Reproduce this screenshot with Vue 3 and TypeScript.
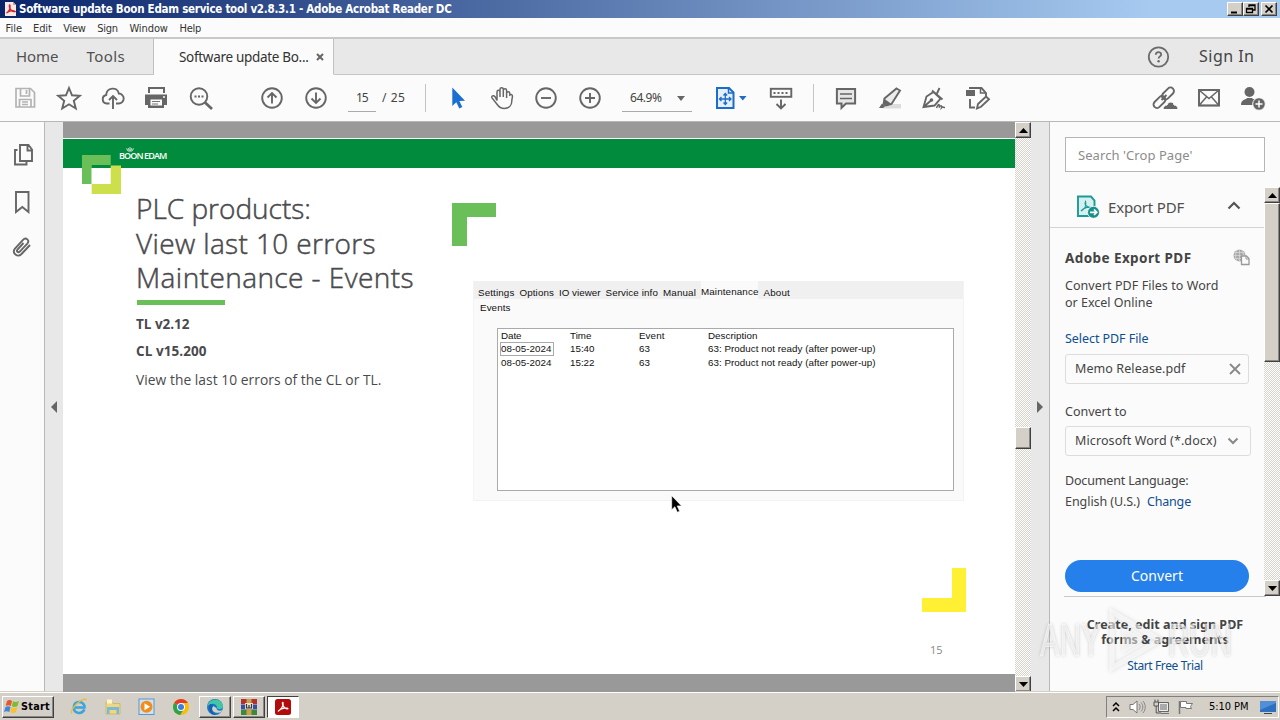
<script setup lang="ts">
interface Row { date: string; time: string; event: string; text: string }

const menus = [
  { label: 'File', w: 16 }, { label: 'Edit', w: 18 }, { label: 'View', w: 22 },
  { label: 'Sign', w: 20 }, { label: 'Window', w: 38 }, { label: 'Help', w: 21 },
]
const serviceTabs = [
  { label: 'Settings', w: 36 }, { label: 'Options', w: 34 }, { label: 'IO viewer', w: 41 },
  { label: 'Service info', w: 52 }, { label: 'Manual', w: 32.5 }, { label: 'Maintenance', w: 57, active: true },
  { label: 'About', w: 26 },
]
const rows: Row[] = [
  { date: '08-05-2024', time: '15:40', event: '63', text: '63: Product not ready (after power-up)' },
  { date: '08-05-2024', time: '15:22', event: '63', text: '63: Product not ready (after power-up)' },
]

// Tracks a single line of text so that it spans the given width.
const vFit = {
  mounted(el: HTMLElement, binding: { value: number }) {
    const range = document.createRange()
    range.selectNodeContents(el)
    const natural = range.getBoundingClientRect().width
    const gaps = (el.textContent || '').trim().length
    el.style.letterSpacing = ((binding.value + 0.5 - natural) / gaps).toFixed(3) + 'px'
  },
}
</script>

<template>
  <div class="screen">
    <header class="titlebar">
      <svg class="app-icon" width="13" height="16" viewBox="0 0 13 16">
        <path d="M1 1h8l3 3v11H1z" fill="#f6e9e6" /><path d="M9 1v3h3" fill="#d99" />
        <path d="M2.500 12C5 11 6.500 7 6 4.500 5.500 3 4.800 5 6 7.500S9 11 11 10.500C9 9 5 10 2.500 12z" fill="none" stroke="#d3222a" stroke-width="1.300" />
      </svg>
      <span v-fit="432">Software update Boon Edam service tool v2.8.3.1 - Adobe Acrobat Reader DC</span>
      <div class="winbtns">
        <i class="btn3d"><svg width="16" height="14"><path d="M4 10.500h6" stroke="#000" stroke-width="2" /></svg></i>
        <i class="btn3d"><svg width="16" height="14"><path d="M6 5V3h6v5h-2M6 3.500h6M3.500 6.500h6v4h-6zM3.500 7h6" fill="none" stroke="#000" stroke-width="1.300" /></svg></i>
        <i class="btn3d last"><svg width="16" height="14"><path d="M4.500 3.500l7 7M11.500 3.500l-7 7" stroke="#000" stroke-width="1.700" /></svg></i>
      </div>
    </header>

    <nav class="menubar">
      <span v-for="m in menus" :key="m.label" v-fit="m.w">{{ m.label }}</span>
    </nav>

    <div class="tabs">
      <div class="tab home"><span v-fit="42">Home</span><span v-fit="38">Tools</span></div>
      <div class="tab active">
        <span v-fit="129">Software update Bo...</span>
        <svg width="10" height="10"><path d="M2 2l6 6M8 2l-6 6" stroke="#666" stroke-width="2" /></svg>
      </div>
      <div class="tab rest">
        <svg width="24" height="24" viewBox="0 0 24 24"><circle cx="11.500" cy="12" r="9.700" fill="none" stroke="#6b6b6b" stroke-width="1.800" /><path d="M8.800 9.800c0-3.600 5.400-3.400 5.400-.4 0 2-2.600 2-2.600 4.100" fill="none" stroke="#6b6b6b" stroke-width="1.800" /><circle cx="11.600" cy="16.300" r="1.200" fill="#6b6b6b" /></svg>
        <span v-fit="55">Sign In</span>
      </div>
    </div>

    <div class="toolbar">
      <div class="group g1">
        <svg class="ic" viewBox="0 0 44 46"><g fill="none" stroke="#b3b3b3" stroke-width="1.700"><path d="M13 13.500h14.500l4 4V32H13z" /><path d="M17.500 14v7h9v-7M16.500 32v-7.500h11.500V32M19 27h6M19 29.500h6M23.500 15v4" /></g></svg>
        <svg class="ic" viewBox="0 0 44 46"><path d="M22 13l3 7.300 7.800.5-6 5 2 7.700-6.800-4.200-6.800 4.200 2-7.700-6-5 7.800-.5z" class="ln" /></svg>
        <svg class="ic" viewBox="0 0 44 46"><path d="M18.500 28.500h-2.800a4.300 4.300 0 01-.5-8.500c.4-7.800 11.300-8.600 12.600-1.500a5 5 0 01-.2 10H25" class="ln" /><path d="M22 34V21.500M18 25l4-4 4 4" class="ln" /></svg>
        <svg class="ic" viewBox="0 0 44 46"><path d="M13 12h17v6H13zM10 19.500h22V30h-3v3H13v-3h-3z" fill="#666" /><path d="M15 14h13v4H15zM15.500 24.500h11.500v6H15.500z" fill="#fbfbfb" /><path d="M17 26.500h8M17 29h6" stroke="#777" stroke-width="1" /><circle cx="29" cy="22" r="1" fill="#fbfbfb" /></svg>
        <svg class="ic" viewBox="0 0 44 46"><circle cx="20" cy="21.500" r="8.300" class="ln" /><path d="M26 27.500l7 6.500" stroke="#666" stroke-width="2.800" /><path d="M15.500 21.500h2M19 21.500h2M22.500 21.500h2" stroke="#666" stroke-width="1.800" /></svg>
      </div>
      <div class="group g2">
        <svg class="ic" viewBox="0 0 44 46"><circle cx="22" cy="23" r="9.800" class="ln" /><path d="M22 28.500v-10M17.500 22.500l4.500-4.500 4.500 4.500" class="ln" /></svg>
        <svg class="ic" viewBox="0 0 44 46"><circle cx="22" cy="23" r="9.800" class="ln" /><path d="M22 17.500v10M17.500 23.500l4.500 4.500 4.500-4.500" class="ln" /></svg>
      </div>
      <div class="pagefield"><span class="cur"><span v-fit="11">15</span></span><span v-fit="23" class="of">/ 25</span></div>
      <i class="sep s1"></i>
      <div class="group g3">
        <svg class="ic" viewBox="0 0 44 46"><path d="M16.300 12.500v18.500l4-3.800 3 6.300 3-1.400-2.900-6.100 5.600-.3z" fill="#1b6fd0" /></svg>
        <svg class="ic" viewBox="0 0 44 46"><path d="M17 25.500V17c0-2.300 3-2.300 3 0v5-7.500c0-2.300 3.300-2.300 3.300 0V22v-6.500c0-2.300 3.300-2.300 3.300 0V23 18.500c0-2.300 3.200-2.300 3.200 0V20c2-1 3 0 2.500 2.500-.2 1.500-.5 2-.5 3.500 0 4.800-3.200 7.500-7.500 7.500-3.800 0-5.500-1.700-7.300-4.300l-5-6.300c-1-2 1.500-3 2.900-1.400z" class="ln thin" /></svg>
        <svg class="ic" viewBox="0 0 44 46"><circle cx="22" cy="23" r="9.800" class="ln" /><path d="M17 23h10" class="ln" /></svg>
        <svg class="ic" viewBox="0 0 44 46"><circle cx="22" cy="23" r="9.800" class="ln" /><path d="M17 23h10M22 18v10" class="ln" /></svg>
      </div>
      <div class="zoomfield"><span v-fit="31">64.9%</span><svg width="8" height="5"><path d="M0 0h8l-4 5z" fill="#666" /></svg></div>
      <div class="group g4">
        <svg class="ic" viewBox="0 0 44 46"><path d="M9 13h12l4.500 4.500V33H9z" fill="#e3effb" stroke="#1d6cc8" stroke-width="2" /><path d="M20.500 13v5h5" fill="none" stroke="#1d6cc8" stroke-width="1.500" /><path d="M17.300 18.500v11M12 24h10.500M15.500 20.500l1.800-2 1.800 2M15.500 27.500l1.800 2 1.800-2M13.500 22l-2 2 2 2M21 22l2 2-2 2" fill="none" stroke="#1d6cc8" stroke-width="1.300" /><path d="M31 21h7.500l-3.700 4.500z" fill="#1d6cc8" /></svg>
      </div>
      <div class="group g5">
        <svg class="ic" viewBox="0 0 44 46"><rect x="11.800" y="13.800" width="20.500" height="8" class="ln" /><path d="M14.500 18h2M18.500 18h2M22.500 18h2M26.500 18h2" stroke="#666" stroke-width="2" /><path d="M22 24.500V33M17.500 29l4.500 4.500 4.500-4.500" class="ln" /></svg>
      </div>
      <i class="sep s2"></i>
      <div class="group g6">
        <svg class="ic" viewBox="0 0 44 46"><path d="M12.900 14h18.200v14.500H22l-4.500 4.300v-4.300h-4.600z" fill="#e6e6e6" stroke="#666" stroke-width="2" /><path d="M16 19h12M16 23.500h12" stroke="#666" stroke-width="1.600" /></svg>
        <svg class="ic" viewBox="0 0 44 46"><path d="M18 29h15v4.500H14z" fill="#ddd" /><path d="M28.500 13.500l3.500 2-8.500 13.500-5.500 1.500-2.300-1.600.7-5.300z" fill="#ececec" stroke="#666" stroke-width="1.900" /><path d="M16.500 24l6.500 4.500-4 2-3.500-2zM11 33l3-4.500 3.500 2.500-2.500 2z" fill="#666" /></svg>
        <svg class="ic" viewBox="0 0 44 46"><path d="M21.500 17l7 6.500-6 7-11 1.500 3-10.500zM11.500 32l7.500-6.500M20 15.500l10.500 9M25 18.500l2.500-5.500" class="ln" /><circle cx="19.500" cy="25" r="1.800" fill="#666" /><path d="M24.500 33c2-5 3.500-4 2.500-.5 2-3 3-2 2.500.3 1.500-1.500 1.500-.3 3.500-.3" class="ln thin" /></svg>
        <svg class="ic" viewBox="0 0 44 46"><path d="M13 13h12.500l4.500 5v3" class="ln" /><path d="M24.500 12v6h5" class="ln thin" /><path d="M10 15h9v6h-9z" fill="#666" /><path d="M14 24v8.500h5M21 33.500l1-4.500 8-7.500 3 2.800-8 7.500z" class="ln" /></svg>
      </div>
      <div class="group g7">
        <svg class="ic" viewBox="0 0 44 46"><g class="ln"><rect x="18" y="15" width="14" height="7" rx="3.500" transform="rotate(-45 25 18.500)" /><rect x="9.500" y="23.500" width="14" height="7" rx="3.500" transform="rotate(-45 16.500 27)" /></g><path d="M18.500 25l5-5" stroke="#666" stroke-width="2" /><path d="M20 34.500c0-3 2-4.500 4-4.500 1.500-4.500 7-3.500 7 0 2.500 0 4 1.500 4 4.500z" fill="#666" stroke="#fbfbfb" /></svg>
        <svg class="ic" viewBox="0 0 44 46"><path d="M12 15h20v15.500H12zM12 15l10 8.500L32 15M12 30.500l7.500-8.500M32 30.500L24.500 22" class="ln thin" /><rect x="12" y="15" width="20" height="15.500" class="ln" /></svg>
        <svg class="ic" viewBox="0 0 44 46"><circle cx="18.500" cy="17" r="5" fill="#666" /><path d="M10 30c0-6 5-5 6-7h5c1 2 6 1 6 7z" fill="#666" /><circle cx="28" cy="29" r="6.300" fill="#666" stroke="#fbfbfb" /><path d="M28 25.500v7M24.500 29h7" stroke="#fff" stroke-width="1.500" /></svg>
      </div>
    </div>

    <main class="body">
      <aside class="rail">
        <svg width="24" height="24" viewBox="0 0 24 24"><path d="M9 2h8.500L21 6.500V18H9zM16.500 2v5.500H21M6.500 7H4v14.500h11.500V18.500" class="ln" /></svg>
        <svg width="24" height="24" viewBox="0 0 24 24"><path d="M5 2h12.500v20l-6.200-5L5 22z" class="ln" /></svg>
        <svg width="24" height="24" viewBox="0 0 24 24"><path d="M20 10l-8.500 9c-4 4-10-1-6.500-5.500l8-8.700c3-3 7 .7 4.300 3.800l-7.500 8c-1.800 1.500-3.800-.2-2.300-2.100l6-6.500" class="ln" /></svg>
      </aside>
      <div class="gutter left"><svg width="6" height="12"><path d="M6 0v12L0 6z" fill="#666" /></svg></div>

      <section class="doc">
        <article class="page">
          <div class="banner"></div>
          <svg class="mark" width="39" height="39" viewBox="0 0 39 39"><path d="M0 0h28.700v10H9.700v19H0z" fill="#6abf59" /><path d="M9.700 13h19v16h-19z" fill="#fff" /><path d="M28.700 10.500H39V39H9.700V29h19z" fill="#cde04c" /></svg>
          <div class="brand">
            <svg width="8" height="6"><path d="M.5 2.500L2 5h4l1.500-2.500M4 1v4M2 2l1 2M6 2L5 4" fill="none" stroke="#fff" stroke-width=".8" /></svg>
            <span v-fit="47">BOON EDAM</span>
          </div>
          <div class="copy">
            <h1><span v-fit="174.500">PLC products:</span><span v-fit="239.500">View last 10 errors</span><span v-fit="277.500">Maintenance - Events</span></h1>
            <i class="rule"></i>
            <p class="b"><span v-fit="53">TL v2.12</span></p>
            <p class="b"><span v-fit="70">CL v15.200</span></p>
            <p><span v-fit="245">View the last 10 errors of the CL or TL.</span></p>
          </div>
          <svg class="corner-g" width="44" height="43"><path d="M0 0h44v14H15v29H0z" fill="#6abf59" /></svg>
          <svg class="corner-y" width="44" height="44"><path d="M30 0h14v44H0V30h30z" fill="#fff033" /></svg>
          <div class="service">
            <div class="stabs"><span v-for="t in serviceTabs" :key="t.label" :class="{ on: t.active }"><b v-fit="t.w">{{ t.label }}</b></span></div>
            <div class="sub"><b v-fit="30">Events</b></div>
            <div class="grid">
              <div class="row"><span><b v-fit="20">Date</b></span><span><b v-fit="21">Time</b></span><span><b v-fit="25">Event</b></span><span><b v-fit="49">Description</b></span></div>
              <div v-for="(r, i) in rows" :key="i" class="row">
                <span :class="{ focus: i === 0 }"><b v-fit="50">{{ r.date }}</b></span><span><b v-fit="24">{{ r.time }}</b></span><span><b v-fit="10.500">{{ r.event }}</b></span><span><b v-fit="167">{{ r.text }}</b></span>
              </div>
            </div>
          </div>
          <span class="num">15</span>
        </article>
        <svg class="pointer" width="12" height="19" viewBox="0 0 12 19"><path d="M.7.700v14l3.200-3 2.400 5.500 2.300-1-2.400-5.300h4.300z" fill="#000" stroke="#fff" stroke-width=".6" /></svg>
      </section>

      <div class="scroll docscroll">
        <i class="btn3d"><svg width="9" height="5"><path d="M4.500 0L9 5H0z" /></svg></i>
        <i class="btn3d thumb"></i>
        <i class="btn3d end"><svg width="9" height="5"><path d="M0 0h9L4.500 5z" /></svg></i>
      </div>
      <div class="gutter right"><svg width="6" height="12"><path d="M0 0v12l6-6z" fill="#666" /></svg></div>

      <aside class="panel">
        <div class="search"><span v-fit="114">Search 'Crop Page'</span></div>
        <div class="pmain">
          <div class="pcol">
            <div class="phead">
              <svg width="24" height="24" viewBox="0 0 24 24"><path d="M2 1.500h13l3.500 4V21H2z" fill="#d5f0ee" stroke="#1b9a97" stroke-width="1.900" /><path d="M5 16c4-2 5.500-6 4.500-9.500C8 9 11 13 15 12.500 12 11.500 8 13 5 16z" fill="none" stroke="#1b9a97" stroke-width="1.200" /><circle cx="17.500" cy="17.300" r="6" fill="#178f8c" stroke="#fff" stroke-width=".8" /><path d="M14 17.300h6.500M18 14.500l2.800 2.800L18 20" fill="none" stroke="#fff" stroke-width="1.700" /></svg>
              <span v-fit="75.500">Export PDF</span>
              <svg class="chev" width="14" height="9"><path d="M1.500 7.500L7 2l5.500 5.500" fill="none" stroke="#555" stroke-width="2.200" /></svg>
            </div>
            <div class="pbody">
              <h2><span v-fit="126">Adobe Export PDF</span>
                <svg width="17" height="17" viewBox="0 0 17 17"><circle cx="6.500" cy="6.500" r="6" fill="#aaa" /><path d="M.5 6.500h12M6.500.500v12M2 3.500h9M2 9.500h9M4 1c-2 4-2 7 0 11M9 1c2 4 2 7 0 11" fill="none" stroke="#ddd" stroke-width=".7" /><path d="M8.500 7h5l2.500 2.500V15.500H8.500z" fill="#fbfbfb" stroke="#999" stroke-width="1.300" /><path d="M13 7v3h3" fill="none" stroke="#999" /></svg></h2>
              <p class="desc"><span v-fit="153">Convert PDF Files to Word</span><span v-fit="87">or Excel Online</span></p>
              <p class="pick link"><span v-fit="83">Select PDF File</span></p>
              <div class="box file"><span v-fit="110">Memo Release.pdf</span><svg width="12" height="12"><path d="M1 1l10 10M11 1L1 11" stroke="#888" stroke-width="1.800" /></svg></div>
              <p class="to"><span v-fit="61">Convert to</span></p>
              <div class="box fmt"><span v-fit="141">Microsoft Word (*.docx)</span><svg width="12" height="8"><path d="M1.500 1.500L6 6l4.500-4.500" fill="none" stroke="#888" stroke-width="2" /></svg></div>
              <p class="lang"><span v-fit="123">Document Language:</span></p>
              <p class="eng"><span v-fit="74.500">English (U.S.)</span><span v-fit="43.500" class="link">Change</span></p>
              <button><span v-fit="51.500">Convert</span></button>
            </div>
          </div>
          <div class="scroll pscroll">
            <i class="btn3d"><svg width="9" height="5"><path d="M4.500 0L9 5H0z" /></svg></i>
            <i class="btn3d thumb"></i>
            <i class="btn3d end"><svg width="9" height="5"><path d="M0 0h9L4.500 5z" /></svg></i>
          </div>
        </div>
        <div class="promo">
          <strong><span v-fit="156">Create, edit and sign PDF</span></strong>
          <strong><span v-fit="127">forms &amp; agreements</span></strong>
          <span class="link trial"><span v-fit="75">Start Free Trial</span></span>
        </div>
      </aside>
    </main>

    <div class="watermark">
      <div class="word"><span>ANY</span></div>
      <svg width="62" height="64" viewBox="0 0 62 64"><path d="M6 4L54 32 6 60z" fill="none" stroke="#fff" stroke-opacity=".6" stroke-width="5" /><path d="M16 19v26l23-13z" fill="#fff" fill-opacity=".5" /></svg>
      <div class="word"><span>RUN</span></div>
    </div>

    <footer class="taskbar">
      <div class="start btn3d">
        <svg width="17" height="16" viewBox="0 0 17 16"><path d="M3 2c2-1.500 3.500-1 5 0L6.800 7C5 6 3.500 6 1.700 7z" fill="#e8562a" /><path d="M9 2.300c2 1 3.500 1 6-.3L13.500 7c-2 1.300-4 1.200-5.700.2z" fill="#7fba32" /><path d="M1.500 8c2-1 3.500-1 5 0l-1.200 5c-1.800-1-3.300-1-5.300 0z" fill="#3f86d8" /><path d="M7.600 8.300c2 1 3.600 1 5.800-.3L12 13c-2 1.300-4 1.200-5.700.2z" fill="#f6c32c" /></svg>
        <span v-fit="28.500">Start</span>
      </div>
      <i class="app"><svg width="18" height="18" viewBox="0 0 18 18"><path d="M14.500 11.500C11 17.500 3.500 15 3.800 9S12 2 14.500 7.800V9.500H5" fill="none" stroke="#3ba4df" stroke-width="2.500" /><path d="M2 15.500C-1.500 12 13-2 16.500 2" fill="none" stroke="#e6be3a" stroke-width="1.300" /></svg></i>
      <i class="app"><svg width="18" height="18" viewBox="0 0 18 18"><path d="M2 4h6l1 1.500h7V16H2z" fill="#efd77f" stroke="#cfae4e" stroke-width=".7" /><path d="M3 1.500h5v4H3z" fill="#fff6c9" /><path d="M3 9h12v7h-2.500v-4h-7v4H3z" fill="#79b8df" /></svg></i>
      <i class="app"><svg width="18" height="18" viewBox="0 0 18 18"><rect x="1" y="1" width="15" height="15.500" fill="#cfe2f3" stroke="#5a96cf" /><circle cx="8.500" cy="8.800" r="6" fill="#f28c1c" /><path d="M6.500 5.300v7l5.500-3.500z" fill="#fff" /></svg></i>
      <i class="app"><svg width="18" height="18" viewBox="0 0 18 18"><circle cx="9" cy="9" r="8" fill="#fbbd08" /><path d="M9 9L2.100 5A8 8 0 0115.900 5H9z" fill="#e33b2e" /><path d="M9 9L2.100 5a8 8 0 006 12L12 11z" fill="#2fa24c" /><circle cx="9" cy="9" r="4" fill="#fff" /><circle cx="9" cy="9" r="3" fill="#3c7de0" /></svg></i>
      <i class="task btn3d edge"><svg width="18" height="18" viewBox="0 0 18 18"><circle cx="9" cy="9" r="8" fill="#1577c9" /><path d="M1 9C2 0 16-1 17 8c0 4-6 4-6 1.500C11 5 4 4 1 9z" fill="#42c6a4" /><path d="M7 8c-3 4 1 8 7.500 6.500l2-2.500c-3 1.500-6 .5-6-2z" fill="#d5d1c8" /><path d="M4 6c-3 6 1 11 6 11-4-2-5-7-2.500-10z" fill="#1a5eae" /></svg></i>
      <i class="task btn3d"><svg width="18" height="18" viewBox="0 0 18 18"><path d="M1 1h16v5H1z" fill="#b4322d" /><path d="M1 6.500h16v5H1z" fill="#364fa0" /><path d="M1 12h16v5H1z" fill="#3b8a38" /><path d="M6.500 1h5v16h-5z" fill="#c9a24c" /><path d="M5 5h8v6H5z" fill="#e8e2d0" /><path d="M6.500 6v4h5V6M9 7v3" fill="none" stroke="#333" stroke-width="1.200" /></svg></i>
      <i class="task pressed"><svg width="16" height="16" viewBox="0 0 16 16"><rect width="16" height="16" rx="2.500" fill="#b30b0b" /><path d="M3 12.300C6 11 9 6 8 3.500c-1.500-1 -.5 6 4.800 6.300C14 8.500 6 8.500 3 12.300z" fill="none" stroke="#fff" stroke-width="1.200" /></svg></i>
      <div class="tray">
        <svg width="8" height="12"><path d="M1 5l3-3 3 3M1 10l3-3 3 3" fill="none" stroke="#000" stroke-width="1.500" /></svg>
        <svg class="vol" width="17" height="16" viewBox="0 0 17 16"><path d="M1 5.500h3L8 2v12l-4-3.500H1z" fill="#fff" stroke="#777" /><path d="M10 5c1.500 2 1.500 4 0 6M12 3.500c2.500 3 2.500 6 0 9M14 2c3 4 3 8 0 12" fill="none" stroke="#888" /></svg>
        <svg width="17" height="16" viewBox="0 0 17 16"><path d="M5.500 3.500h10v9h-10z" fill="#aaa" stroke="#666" /><path d="M6.500 4.500h8v7h-8z" fill="none" stroke="#eee" /><path d="M8 14.500h8" stroke="#777" /><path d="M1 3h4.500v4H1zM2 .5V3M5 .5V3M3.200 7v7H8" fill="none" stroke="#555" /></svg>
        <svg width="17" height="16" viewBox="0 0 17 16"><path d="M2.500 2v13" stroke="#777" stroke-width="1.500" /><path d="M3.500 2.500h6v2h6l-2 3 1 2H9v-1H3.500z" fill="#fff" stroke="#777" /></svg>
        <span v-fit="39">5:10 PM</span>
        <svg class="mon" width="16" height="13"><rect width="16" height="11" fill="#2f6fc0" /><path d="M0 0h16v2L0 9z" fill="#528fd8" /><path d="M4 12.500h8" stroke="#345" /></svg>
      </div>
    </footer>
  </div>
</template>

<style>
html, body { margin: 0; overflow: hidden; }
</style>

<style scoped>
* { box-sizing: border-box; }
.screen { position: relative; width: 1280px; height: 720px; overflow: hidden; display: flex; flex-direction: column; background: #fbfbfb; color: #444; font-family: "Noto Sans", "Open Sans", sans-serif; font-size: 12.500px; white-space: nowrap; }
.ln { fill: none; stroke: #666; stroke-width: 1.900; }
.thin { stroke-width: 1.500; }
svg { display: block; flex: none; }
h1, h2, p { margin: 0; font-weight: 400; }
b { font-weight: 400; }
.btn3d { display: flex; align-items: center; justify-content: center; background: #d4d0c8; border: 1px solid; border-color: #fff #404040 #404040 #fff; box-shadow: inset -1px -1px #888; }

.titlebar { height: 18px; flex: none; display: flex; align-items: center; padding: 0 3px 0 4px; background: linear-gradient(90deg, #0a246a, #a6caf0 90%); color: #fff; font: bold 11.500px/18px "DejaVu Sans Condensed", "DejaVu Sans", sans-serif; }
.app-icon { margin-right: 2px; }
.winbtns { display: flex; margin-left: auto; }
.winbtns .btn3d { width: 16px; height: 14px; }
.winbtns .last { margin-left: 2px; }

.menubar { height: 19px; flex: none; display: flex; gap: 11.600px; padding-left: 5.500px; font: 11px/21px "DejaVu Sans Condensed", "DejaVu Sans", sans-serif; color: #333; }
.menubar span:first-child { margin-right: -.5px; }
.menubar span:nth-child(n+5) { position: static; }

.tabs { height: 38px; flex: none; display: flex; border-top: 2px solid #c8c8c8; font-size: 15px; line-height: 35px; color: #505050; }
.tab { display: flex; background: #e8e8e8; border-bottom: 1px solid #c6c6c6; }
.home { width: 154px; padding-left: 16px; gap: 28px; border-right: 1px solid #c0c0c0; }
.active { width: 180px; padding-left: 25px; background: #fbfbfb; border-bottom-color: #fbfbfb; border-right: 1px solid #c0c0c0; font-size: 13.500px; color: #333; line-height: 38px; gap: 6px; align-items: center; }
.rest { flex: 1; padding: 0 0 0 813px; align-items: center; gap: 28px; font-size: 16px; color: #444; }

.toolbar { height: 47px; flex: none; display: flex; border-bottom: 1px solid #b8b8b8; }
.ic { width: 44px; height: 46px; }
.group { display: flex; }
.g1 { margin-left: 3px; }
.g2 { margin-left: 27px; }
.pagefield { width: 87px; padding-left: 10px; display: flex; height: 37px; line-height: 45px; font-size: 12px; }
.cur { width: 28px; padding-left: 8px; border-bottom: 1px solid #aaa; }
.of { margin-left: 6px; }
.sep { width: 1px; height: 28px; margin-top: 9px; background: #c4c4c4; }
.g3 { margin-left: 10px; }
.zoomfield { width: 70px; margin: 0 16px 0 10px; height: 37px; padding: 0 7px 0 8px; display: flex; align-items: flex-start; justify-content: space-between; line-height: 45px; font-size: 12px; border-bottom: 1px solid #aaa; }
.zoomfield svg { margin-top: 21px; }
.g5 { margin-left: 7px; }
.s2 { margin-left: 10px; }
.g6 { margin-left: 10px; }
.g7 { margin-left: 143px; }

.body { flex: 1; min-height: 0; display: flex; }
.rail { width: 45px; border-right: 1px solid #b8b8b8; padding: 21px 0 0 11px; display: flex; flex-direction: column; gap: 22.500px; }
.rail svg:last-child { margin: -1px 0 0 -1px; }
.gutter { width: 18px; background: #e8e8e8; display: flex; align-items: center; justify-content: center; }
.gutter.right { width: 19px; border-right: 1px solid #b8b8b8; }
.doc { position: relative; width: 952px; background: #999; padding-top: 16px; overflow: hidden; }
.page { position: relative; height: 536px; background: #fff; padding-top: 1px; color: #4a4a4d; font-family: "Open Sans", "Noto Sans", sans-serif; }
.banner { height: 29px; background: #008c3c; }
.mark { position: absolute; left: 19px; top: 17px; }
.brand { position: absolute; left: 56px; top: 8px; color: #fff; font: 9px/10px "Open Sans", sans-serif; font-weight: 600; }
.brand svg { margin: 0 0 -1px 7px; }
.brand span { display: block; width: max-content; }
.copy { padding: 23px 0 0 73px; }
h1 { font-weight: 300; font-size: 28px; line-height: 34.600px; -webkit-text-stroke: .5px #4a4a4d; }
h1 span { display: block; width: max-content; }
.rule { display: block; width: 88px; height: 5px; margin: 5px 0 0 1px; background: #6abf59; }
.copy p { font-size: 13.800px; line-height: 27.500px; }
.copy .rule + p { margin-top: 6px; }
.copy .b { font-weight: 700; font-size: 13.500px; }
.corner-g { position: absolute; left: 389px; top: 65px; }
.corner-y { position: absolute; left: 859px; top: 430px; }
.service { position: absolute; left: 410px; top: 143px; width: 491px; height: 220px; background: #fafafa; border: 1px solid #f3f3f3; border-top: 0; font: 9.800px/19px "Liberation Sans", Arial, sans-serif; color: #111; }
.stabs { display: flex; gap: 5px; height: 18px; padding-left: 4px; line-height: 23px; background: #f0f0f0; }
.stabs .on { background: #fafafa; line-height: 21px; }
.sub { padding-left: 6px; line-height: 17px; height: 29px; }
.grid { width: 457px; height: 163px; margin-left: 23px; border: 1px solid #aaa; background: #fff; padding: 0 0 0 2px; }
.row { display: grid; grid-template-columns: 69px 69px 69px 1fr; height: 13.400px; line-height: 14px; }
.row span { padding-left: 1px; }
.focus { width: 54px; height: 14px; outline: 1px solid #aaa; outline-offset: -1px; }
.num { position: absolute; left: 867px; top: 503px; font-size: 11px; line-height: 18px; color: #888; }
.pointer { position: absolute; left: 608px; top: 373px; }

.scroll { display: flex; flex-direction: column; width: 16px; background: conic-gradient(#fff 25%, #d6d3cb 0 50%, #fff 0 75%, #d6d3cb 0) 0 0 / 2px 2px; }
.scroll .btn3d { width: 16px; height: 16px; flex: none; }
.docscroll .thumb { height: 22px; margin-top: 289px; }
.scroll .end { margin-top: auto; }

.panel { width: 230px; padding-left: 1px; }
.search { width: 200px; height: 35px; margin: 15px 0 12px 14px; border: 1px solid #b5b5b5; background: #fff; padding-left: 12px; color: #8c8c8c; font-size: 13px; line-height: 35px; }
.pmain { display: flex; height: 416px; margin-left: -1px; }
.pcol { width: 214px; }
.phead { height: 44px; border-bottom: 1px solid #d4d4d4; display: flex; align-items: center; padding-left: 26px; font-size: 15px; color: #505050; }
.phead span { margin: 3px 0 0 8px; }
.phead svg { margin-top: 3px; }
.phead .chev { margin: 0 23px 0 auto; }
.pbody { padding-left: 15px; }
h2 { display: flex; font-size: 13.500px; font-weight: 700; line-height: 20px; padding-top: 20px; }
h2 svg { margin: 1px 0 0 41px; }
.desc { line-height: 16.800px; padding-top: 10px; }
.desc span { display: block; width: max-content; }
.link { color: #0f4f8f; }
.pick { line-height: 20px; margin-top: 17px; height: 20px; }
.box { display: flex; align-items: center; justify-content: space-between; height: 30px; border: 1px solid #dcdcdc; border-radius: 3px; padding: 0 7px 0 9px; font-size: 12.500px; }
.file { width: 184px; margin-top: 5px; }
.to { line-height: 20px; margin-top: 18px; }
.fmt { width: 186px; margin-top: 4px; padding-right: 11px; }
.lang { line-height: 20px; margin-top: 15px; }
.eng { display: flex; gap: 7px; line-height: 20px; margin-top: 1px; }
button { display: block; width: 184px; height: 32px; margin: 48px 0 0; padding: 0; border: 0; border-radius: 16px; background: #2680eb; color: #fff; font: 14px/32px "Noto Sans", sans-serif; }
.pscroll { height: 409px; margin-top: 3px; }
.pscroll .thumb { height: 159px; }
.promo { display: flex; flex-direction: column; align-items: center; margin: -4px 0 0 13px; width: 202px; border-top: 1px solid #c8c8c8; padding-top: 20px; line-height: 15px; }
.trial { margin-top: 11px; font-size: 12px; }

.watermark { position: absolute; left: 1040px; top: 608px; display: flex; align-items: center; color: rgba(255, 255, 255, .6); font: 46px/64px "Liberation Sans", Arial, sans-serif; text-shadow: 0 0 4px rgba(0, 0, 0, .25); -webkit-text-stroke: 1px rgba(255, 255, 255, .5); }
.word { width: 66px; }
.word span { display: inline-block; transform: scaleX(.64); transform-origin: left; }
.watermark svg { filter: drop-shadow(0 0 2px rgba(0, 0, 0, .22)); }

.taskbar { height: 28px; flex: none; display: flex; align-items: center; padding: 1px 1px 0 2px; background: #d4d0c8; border-top: 1px solid #fff; box-shadow: 0 -1px #d4d0c8; font: 11px/20px "DejaVu Sans Condensed", "DejaVu Sans", sans-serif; color: #000; }
.start { width: 52px; height: 22px; font-weight: 700; justify-content: flex-start; font-size: 10.800px; padding-left: 1px; }
.app { width: 34px; display: flex; justify-content: center; }
.start + .app { margin-left: 8px; }
.task { width: 32px; height: 22px; display: flex; align-items: center; justify-content: center; margin-right: 2px; }
.edge { margin-left: 1px; }
.pressed { background: #fff; border: 1px solid; border-color: #404040 #fff #fff #404040; }
.tray { margin-left: auto; width: 173px; height: 22px; border: 1px solid; border-color: #808080 #fff #fff #808080; display: flex; align-items: center; padding: 0 2px 0 5px; gap: 7px; }
.tray .vol { margin-left: 2px; }
.tray span { margin-left: 8px; }
.tray .mon { margin-left: auto; }
</style>
